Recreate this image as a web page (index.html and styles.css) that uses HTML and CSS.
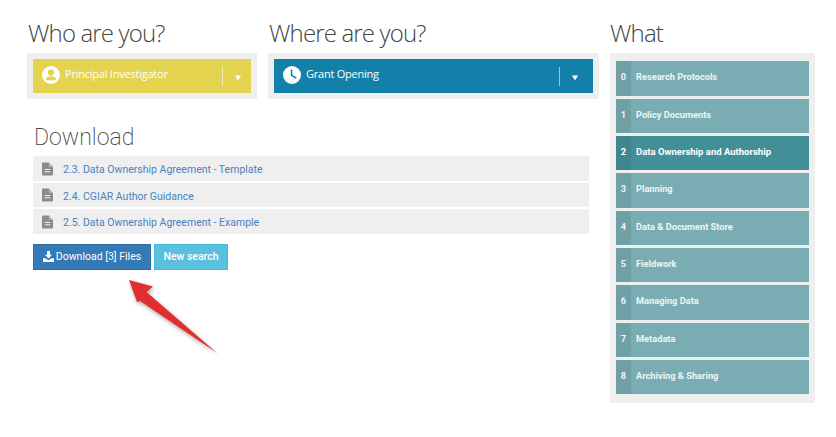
FILE: index.html
```html
<!DOCTYPE html>
<html lang="en">
<head>
<meta charset="utf-8">
<title>Download</title>
<link rel="stylesheet" href="styles.css">
</head>
<body>
<div class="page">
  <main class="main">
    <div class="selectors">
      <section class="selector selector-who">
        <h2 class="title">Who are you?</h2>
        <div class="well">
          <div class="dropdown dropdown-yellow">
            <svg class="dd-icon" viewBox="0 0 18 18"><circle cx="9" cy="9" r="9" fill="#fff"/><circle cx="9" cy="6.6" r="3.1" fill="#e3d34e"/><path d="M3.800 14.200c0-2.600 1.800-3.700 3.200-3.700h4c1.400 0 3.200 1.100 3.200 3.700z" fill="#e3d34e"/></svg>
            <span class="dd-label">Principal Investigator</span>
            <span class="dd-arrow dd-arrow-narrow"><svg class="caret" viewBox="0 0 6 6"><path d="M0 .5h6L3 5.500z" fill="#fff"/></svg></span>
          </div>
        </div>
      </section>
      <section class="selector selector-where">
        <h2 class="title">Where are you?</h2>
        <div class="well">
          <div class="dropdown dropdown-blue">
            <svg class="dd-icon" viewBox="0 0 18 18"><circle cx="9" cy="9" r="9" fill="#fff"/><path d="M8.600 3.400v6l4.600 2.600" fill="none" stroke="#1380a9" stroke-width="1.600"/></svg>
            <span class="dd-label">Grant Opening</span>
            <span class="dd-arrow"><svg class="caret" viewBox="0 0 6 6"><path d="M0 .5h6L3 5.500z" fill="#fff"/></svg></span>
          </div>
        </div>
      </section>
    </div>
    <section class="download">
      <h2 class="download-title">Download</h2>
      <ul class="files">
        <li class="file"><svg class="file-icon" viewBox="0 0 12 14"><path d="M1 0h6.500L12 4.500V13a1 1 0 0 1-1 1H1a1 1 0 0 1-1-1V1a1 1 0 0 1 1-1z" fill="#8c8c8c"/><path d="M3 7.500h6M3 10h6" stroke="#efefef" stroke-width="1.100"/><path d="M7.500 0v4.500H12" fill="#efefef" opacity=".45"/></svg><a class="file-link" href="#">2.3. Data Ownership Agreement - Template</a></li>
        <li class="file file-short"><svg class="file-icon" viewBox="0 0 12 14"><path d="M1 0h6.500L12 4.500V13a1 1 0 0 1-1 1H1a1 1 0 0 1-1-1V1a1 1 0 0 1 1-1z" fill="#8c8c8c"/><path d="M3 7.500h6M3 10h6" stroke="#efefef" stroke-width="1.100"/><path d="M7.500 0v4.500H12" fill="#efefef" opacity=".45"/></svg><a class="file-link" href="#">2.4. CGIAR Author Guidance</a></li>
        <li class="file"><svg class="file-icon" viewBox="0 0 12 14"><path d="M1 0h6.500L12 4.500V13a1 1 0 0 1-1 1H1a1 1 0 0 1-1-1V1a1 1 0 0 1 1-1z" fill="#8c8c8c"/><path d="M3 7.500h6M3 10h6" stroke="#efefef" stroke-width="1.100"/><path d="M7.500 0v4.500H12" fill="#efefef" opacity=".45"/></svg><a class="file-link" href="#">2.5. Data Ownership Agreement - Example</a></li>
      </ul>
      <div class="actions">
        <a class="btn btn-primary" href="#"><svg class="btn-icon" viewBox="0 0 12 12"><path d="M4.400 0h3.200v4.200h2.300L6 8.200 2.100 4.200h2.300z" fill="#fff"/><path d="M0 8h2.600L6 10l3.400-2H12v4H0z" fill="#fff"/></svg>Download [3] Files</a>
        <a class="btn btn-info" href="#">New search</a>
      </div>
    </section>
  </main>
  <aside class="what">
    <h2 class="title">What</h2>
    <ol class="steps">
      <li class="step"><span class="step-num">0</span><span class="step-name">Research Protocols</span></li>
      <li class="step step-b"><span class="step-num">1</span><span class="step-name">Policy Documents</span></li>
      <li class="step step-b step-active"><span class="step-num">2</span><span class="step-name">Data Ownership and Authorship</span></li>
      <li class="step"><span class="step-num">3</span><span class="step-name">Planning</span></li>
      <li class="step step-b"><span class="step-num">4</span><span class="step-name">Data &amp; Document Store</span></li>
      <li class="step step-b"><span class="step-num">5</span><span class="step-name">Fieldwork</span></li>
      <li class="step"><span class="step-num">6</span><span class="step-name">Managing Data</span></li>
      <li class="step step-b"><span class="step-num">7</span><span class="step-name">Metadata</span></li>
      <li class="step step-b"><span class="step-num">8</span><span class="step-name">Archiving &amp; Sharing</span></li>
    </ol>
  </aside>
</div>
<svg class="arrow" viewBox="0 0 110 90" width="110" height="90"><path d="M2 3L26 9.500 19.500 15 90 76 13 24 10 25z" fill="#e12f2f"/></svg>
</body>
</html>
```

FILE: styles.css
```css
* { box-sizing: border-box; }
html, body { margin: 0; padding: 0; background: #fff; }
body { width: 836px; height: 437px; overflow: hidden; position: relative; font-family: Roboto, sans-serif; }
.page { display: flex; gap: 11px; padding: 0 0 0 27px; }
.main { width: 572px; }
.selectors { display: flex; gap: 11px; }
.selector-who { width: 230px; }
.selector-where { width: 331px; }
.title { margin: 0; height: 53px; padding-top: 15px; padding-left: 1px; font: 300 24px/36px "Open Sans", sans-serif; letter-spacing: -.85px; color: #444; white-space: nowrap; }
.well { background: #efefef; padding: 6px; height: 46px; }
.dropdown { height: 34px; display: flex; align-items: flex-start; padding: 7px 0 0 9px; color: #fff; font: 400 11px/16px "Open Sans", sans-serif; letter-spacing: -.23px; }
.dropdown-yellow { background: #e3d34e; }
.dropdown-blue { background: #1380a9; }
.dd-icon { width: 18px; height: 18px; flex: none; margin-right: 5px; }
.dd-label { flex: 1; white-space: nowrap; }
.dd-arrow { width: 34px; height: 19px; margin: 1px 0 0; padding-left: 12px; border-left: 1px solid rgba(255,255,255,.55); display: flex; align-items: center; flex: none; }
.dd-arrow-narrow { width: 29px; }
.caret { width: 6px; height: 6px; margin-top: 2px; }
.download { padding: 22px 10px 0 6px; }
.download-title { margin: 0 0 0 1px; font: 200 23px/33px Roboto, sans-serif; color: #444; height: 35px; }
.files { list-style: none; margin: 0; padding: 0; display: flex; flex-direction: column; gap: 2px; }
.file { background: #efefef; height: 25px; display: flex; align-items: center; padding-left: 9px; }
.file-short { height: 24px; }
.file-icon { width: 11px; height: 14px; flex: none; margin-right: 10px; }
.file-link { color: #4a82bd; font-size: 10.5px; padding-top: 2px; text-decoration: none; white-space: nowrap; }
.actions { display: flex; gap: 3px; margin-top: 10px; }
.btn { height: 26px; padding-bottom: 2px; display: flex; align-items: center; justify-content: center; color: #fff; font-size: 10.5px; text-decoration: none; border: 1px solid; white-space: nowrap; }
.btn-primary { width: 118px; background: #337ab7; border-color: #2e6da4; }
.btn-info { width: 74px; background: #5bc0de; border-color: #46b8da; color: #fff; font-weight: 500; }
.btn-icon { width: 11px; height: 11px; margin-right: 2px; }
.what { width: 205px; }
.what .title { padding-left: 0; }
.steps { list-style: none; margin: 0; padding: 8px 6px 9px; background: #efefef; display: flex; flex-direction: column; gap: 3px; }
.step { display: flex; height: 35px; background: #7aadb3; color: #eef5f5; font-size: 9.25px; font-weight: 700; }
.step-b { height: 34px; }
.step-active { background: #438f98; color: #fff; font-size: 9.5px; }
.step-num { width: 15px; background: rgba(60,80,90,.14); text-align: center; padding-top: 10px; line-height: 12px; flex: none; }
.step-name { padding: 10px 0 0 5px; line-height: 12px; white-space: nowrap; }
.arrow { position: absolute; left: 127px; top: 277px; overflow: visible; filter: drop-shadow(1px 2px 2px rgba(0,0,0,.35)); }
```
